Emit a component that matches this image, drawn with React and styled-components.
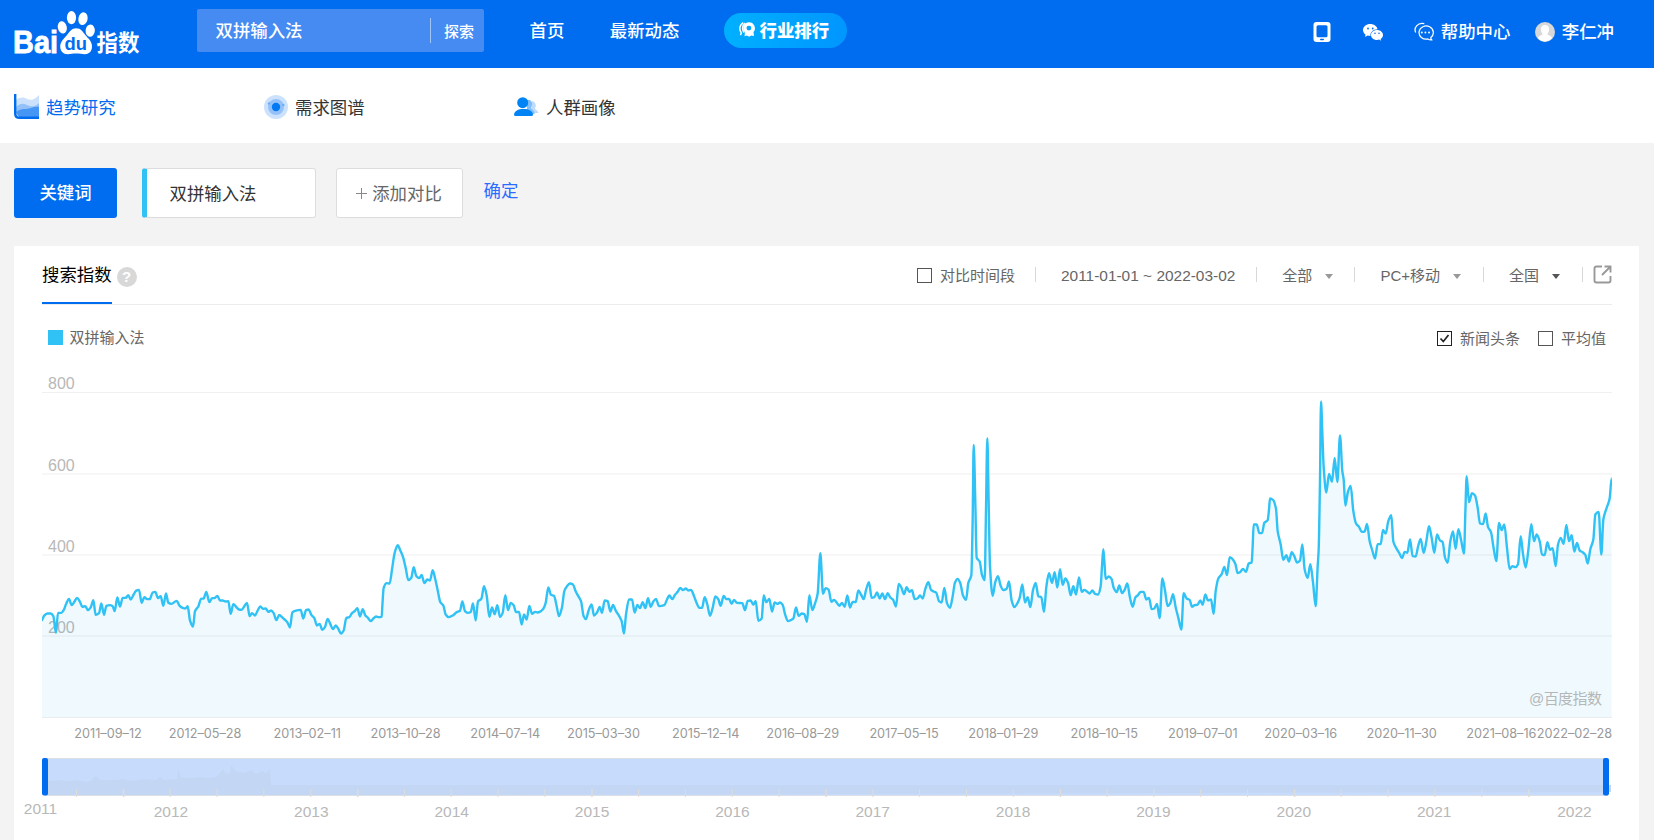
import { useState } from "react";
import styled, { createGlobalStyle } from "styled-components";

const YEARS = [2012, 2013, 2014, 2015, 2016, 2017, 2018, 2019, 2020, 2021, 2022];

const DATES = [
    "2011–09–12", "2012–05–28", "2013–02–11", "2013–10–28", "2014–07–14",
    "2015–03–30", "2015–12–14", "2016–08–29", "2017–05–15", "2018–01–29",
    "2018–10–15", "2019–07–01", "2020–03–16", "2020–11–30", "2021–08–16",
];

// weekly trend, in thirds of a pixel, each part with its own offset from the plot corner
const TREND = [
    {
        dx: -36, dy: 381,
        points: "36,302 42,289 52,282 62,282 70,290 78,340 84,280 94,280 102,270 108,254 117,238 125,257 133,247 141,235 150,247 157,262 166,260 174,272 182,264 190,242 197,286 207,281 214,252 222,286 229,259 240,257 248,260 254,275 262,234 270,261 278,235 287,235 295,227 302,240 311,225 318,214 327,211 335,250 343,233 351,239 359,239 368,219 376,217 384,236 392,230 400,259 408,222 415,250 424,253 440,244 449,259 458,265 466,267 473,260 480,303 489,321 495,275 505,261 513,238 521,237 529,217 538,248 546,236 553,236 562,229 570,243 578,243 587,246 595,245 602,283 610,254 620,264 627,270 635,271 643,260 651,250 659,290 666,281 675,288 683,273 691,261 700,268 707,267 715,277 723,273 731,281 739,302 748,286 756,293 764,300 772,308 780,324 787,279 795,274 812,271 820,297 828,272 836,270 844,286 853,296 861,318 869,313 877,331 885,322 893,298 901,314 909,329 917,318 925,328 933,342 941,333 949,295 958,293 966,281 974,275 982,266 990,291 998,269 1006,288 1014,295 1022,305 1030,297 1038,291 1046,293 1055,292 1057,260 1061,205 1070,191 1079,192 1086,150 1094,100 1103,77 1111,93 1119,112 1127,145 1135,182 1144,175 1151,143 1159,170 1168,176 1175,166 1183,191 1192,180 1200,183 1208,152",
    },
    {
        dx: 1164, dy: 381,
        points: "16,180 23,212 31,248 40,258 47,285 56,293 70,287 80,278 90,274 97,246 105,275 113,280 122,278 129,252 137,303 144,246 154,238 162,200 170,228 178,292 186,264 194,284 202,257 210,292 218,280 226,227 234,272 242,250 251,257 258,278 267,277 275,315 282,285 290,300 298,259 306,283 315,277 323,279 331,276 340,268 347,250 355,204 363,226 372,229 380,260 387,290 396,263 403,215 412,199 420,192 429,195 437,215 445,230 453,245 461,290 468,299 476,272 485,255 492,288 501,279 509,262 516,280 524,243 533,245 541,276 549,256 558,275 566,287 575,305 582,342 588,285 597,240 606,240 614,279 622,256 630,266 638,248 646,266 654,236 662,262 670,246 678,238 687,260 703,257 711,240 718,228 727,239 735,226 743,217 751,205 759,212 767,207 775,213 783,211 791,227 799,248 808,265 816,265 824,233 832,255 840,289 848,265 856,231 865,239 872,259 881,229 889,239 897,238 905,253 912,241 921,250 937,251 945,272 953,244 962,243 970,256 977,244 985,304 995,297 1001,228 1009,248 1018,238 1026,276 1034,249 1042,253 1050,249 1058,256 1066,287 1074,305 1082,302 1090,297 1098,264 1106,289 1115,282 1123,284 1131,307 1138,227 1147,272 1155,252 1163,222 1171,101 1179,223 1187,206 1196,211",
    },
    {
        dx: 2364, dy: 81,
        points: "4,547 12,541 20,549 28,559 36,550 44,562 52,528 60,564 68,547 77,548 85,513 93,525 101,539 108,512 117,488 125,535 133,533 141,519 149,537 157,522 165,539 173,521 181,534 189,540 198,561 206,493 214,504 222,524 230,503 238,517 246,512 254,539 262,537 270,528 278,537 286,508 295,488 303,511 311,516 319,520 327,545 335,549 343,505 351,551 360,565 368,530 375,489 383,478 391,491 399,528 408,541 415,490 424,467 428,300 431,76 436,250 440,415 449,426 456,466 464,482 468,270 472,56 476,250 480,440 488,529 496,487 504,470 512,499 520,512 530,508 537,486 545,543 553,563 561,553 569,535 577,495 585,549 593,533 601,563 609,512 617,490 625,530 634,533 642,577 649,502 657,461 666,490 674,458 682,504 690,449 698,496 706,477 714,490 722,527 730,500 738,525 747,474 755,517 763,511 771,516 779,522 787,513 795,523 804,525 812,500 816,440 820,389 824,440 827,478 836,471 845,479 851,505 860,518 868,498 876,521 884,511 892,492 900,535 908,562 916,534 924,527 932,517 941,517 949,540 957,535 965,569 973,567 981,553 989,596 997,477 1005,513 1013,560 1021,551 1029,524 1037,563 1045,595 1054,630 1061,521 1070,537 1079,541 1086,562 1094,557 1102,556 1111,543 1118,556 1126,525 1134,543 1143,540 1151,583 1157,515 1165,477 1175,464 1183,442 1191,467 1199,413 1207,418 1216,433 1223,461",
    },
    {
        dx: 3534, dy: -39,
        points: "60,578 69,568 78,577 86,552 95,549 98,500 101,435 110,435 118,461 126,461 133,430 143,422 147,390 150,357 159,361 168,388 173,455 182,495 190,541 199,527 207,546 215,518 223,530 231,549 240,543 247,495 254,570 263,595 271,554 279,608 287,680 293,560 296,510 300,300 303,66 307,160 311,262 319,339 327,283 336,307 344,235 352,308 360,168 367,275 371,300 376,378 384,336 392,319 400,395 408,432 417,442 425,457 434,456 441,433 449,485 457,513 465,537 473,494 482,494 489,451 497,462 505,425 514,407 520,486 530,508 538,521 546,536 554,517 562,520 570,480 578,530 587,531 594,502 602,478 611,520 619,485 627,440 635,475 643,520 651,465 660,483 668,488 675,534 683,550 691,485 699,456 707,508 715,449 724,485 732,522 736,400 740,290 747,368 756,341 765,348 773,385 780,432 789,434 797,402 804,442 813,458 821,507 829,545 837,430 845,452 853,435 861,505 869,569 877,560 886,563 894,554 902,470 909,523 917,564 925,512 934,434 942,485 950,465 959,485 966,524 974,527 982,488 990,511 998,506 1007,560 1014,495 1022,475 1031,493 1039,436 1047,485 1055,467 1063,516 1071,490 1079,513 1088,518 1096,526 1103,552 1111,509 1120,480 1126,405 1136,397 1144,525 1150,420 1159,388 1169,357 1175,296",
    },
];

const points = TREND.flatMap(({ dx, dy, points }) =>
    points.split(" ").map(p => {
        const [x, y] = p.split(",").map(Number);
        return [(x + dx) / 3, (y + dy) / 3];
    })
);

// monotone curve through the points, flat at every peak and valley
function smooth(pts) {
    const slope = i => (pts[i + 1][1] - pts[i][1]) / (pts[i + 1][0] - pts[i][0]);
    const tangent = i => {
        if (i === 0 || i === pts.length - 1) return 0;
        const a = slope(i - 1);
        const b = slope(i);
        return a * b <= 0 ? 0 : (2 * a * b) / (a + b);
    };
    let d = `M${pts[0][0]},${pts[0][1]}`;
    for (let i = 0; i < pts.length - 1; i++) {
        const [x0, y0] = pts[i];
        const [x1, y1] = pts[i + 1];
        const h = (x1 - x0) / 3;
        d += `C${[x0 + h, y0 + tangent(i) * h, x1 - h, y1 - tangent(i + 1) * h, x1, y1].map(n => n.toFixed(2)).join(",")}`;
    }
    return d;
}

const line = smooth(points);

function Logo() {
    return (
        <LogoSvg width="128" height="46" viewBox="0 0 128 46">
            <g fill="#fff">
                <text x="-1" y="44" fontFamily="Liberation Sans, sans-serif" fontWeight="700" fontSize="31.5" stroke="#fff" strokeWidth=".8" textLength="45" lengthAdjust="spacingAndGlyphs">Bai</text>
                <ellipse cx="57.5" cy="8.6" rx="4.6" ry="6.6" />
                <ellipse cx="69" cy="9.7" rx="4.6" ry="6.4" transform="rotate(12 69 9.7)" />
                <ellipse cx="48.3" cy="18.4" rx="4.5" ry="6.2" transform="rotate(-12 48.3 18.4)" />
                <ellipse cx="76.2" cy="21.6" rx="4.6" ry="6.2" transform="rotate(4 76.2 21.6)" />
                <path d="M62.3 19.2c4.6 0 6.6 3.6 9 6.8 3 3.8 6.7 6 6.7 11.5 0 5-3.2 7.7-7.2 7.7-3.200 0-5-.7-8.500-.7-3.700 0-5.300.7-8.600.7-4.600 0-7.500-3.200-7.500-7.700 0-5 3.800-7.800 6.600-11.300 2.700-3.400 4.900-7 9.500-7z" />
                <text x="82.5" y="42" fontFamily="Noto Sans CJK SC, sans-serif" fontWeight="700" fontSize="23" textLength="43" lengthAdjust="spacingAndGlyphs">指数</text>
            </g>
            <text x="50.5" y="41" fill="#006df0" fontFamily="Liberation Sans, sans-serif" fontWeight="700" fontSize="19" textLength="22.5" lengthAdjust="spacingAndGlyphs">du</text>
        </LogoSvg>
    );
}

function MedalIcon() {
    return (
        <svg width="17" height="15" viewBox="0 0 18 16">
            <path d="M4.5.8C.8 2.6-.4 7.5 2.4 11.5L1.5 14M6.6 1.2C3.2 3.6 3 8.5 5.5 11.2" fill="none" stroke="#fff" strokeWidth="1.6" />
            <path d="M10.500.2a6.400 6.400 0 0 1 4.900 10.500l.5 4.300-3-.5-2.200 1.300-2.300-1.300-2.500.6.3-4.200A6.400 6.400 0 0 1 10.500.2z" fill="#fff" />
            <circle cx="10.5" cy="6.5" r="2.6" fill="#00a6ff" />
        </svg>
    );
}

function TabletIcon() {
    return (
        <svg width="18" height="20" viewBox="0 0 18 20">
            <rect x=".5" width="17" height="20" rx="3" fill="#fff" />
            <rect x="3.5" y="3.3" width="11" height="12" rx="1.5" fill="#006df0" />
            <rect x="7" y="16.7" width="4" height="1.5" rx=".7" fill="#006df0" />
        </svg>
    );
}

function WechatIcon() {
    return (
        <svg width="20" height="17" viewBox="0 0 20 17">
            <path d="M7.3 0C3.2 0 0 2.7 0 6.1 0 8 1 9.6 2.6 10.7L2 13l2.6-1.4c.9.3 1.8.4 2.800.4C7.200 8 10.300 5.200 14.500 5.200 13.900 2.200 10.900 0 7.300 0z" fill="#fff" />
            <path d="M14 5.9c-3.400 0-6 2.300-6 5s2.600 5 6 5c.7 0 1.400-.1 2-.3l2.200 1.200-.6-1.900c1.500-.9 2.400-2.400 2.400-4 0-2.700-2.700-5-6-5z" fill="#fff" />
            <g fill="#006df0">
                <circle cx="5" cy="4.5" r=".9" /><circle cx="9.7" cy="4.5" r=".9" />
                <circle cx="12" cy="9.3" r=".8" /><circle cx="16" cy="9.3" r=".8" />
            </g>
        </svg>
    );
}

function ChatIcon() {
    return (
        <svg width="20" height="20" viewBox="0 0 21 20">
            <g fill="none" stroke="#fff" strokeWidth="1.3">
                <path d="M17.7 15.800A7.500 6.900 0 1 0 14.500 17.300c1.400.8 2.600 1.200 4 .9-.8-.8-1-1.500-.8-2.400z" />
                <path d="M1.800 10.500C-.5 5.800 3.600-.3 10.800 1.300" />
            </g>
            <g fill="#fff"><circle cx="8.2" cy="10.5" r="1" /><circle cx="12" cy="10.5" r="1" /><circle cx="15.8" cy="10.5" r="1" /></g>
        </svg>
    );
}

function AvatarIcon() {
    return (
        <svg width="20" height="20" viewBox="0 0 20 20">
            <circle cx="10" cy="10" r="10" fill="#d8d8d8" />
            <path d="M10 3c2.700 0 4.100 1.900 4.100 4.300 0 2-.7 3.400-1.500 4.200v1.200c2 .7 4 1.500 4.500 3.400A9.200 9.200 0 0 1 2.900 16c.5-1.800 2.500-2.600 4.500-3.300v-1.200C6.600 10.700 5.900 9.300 5.900 7.300 5.900 4.900 7.300 3 10 3z" fill="#fff" />
        </svg>
    );
}

function TrendIcon() {
    return (
        <svg width="25" height="25" viewBox="0 0 25 25">
            <path d="M2 6c4-3 7-3 11-1 5 2 8 0 12-4v22H5L2 20z" fill="#cce2fc" />
            <path d="M2 13c4-4 7-4 11-2 5 2 8 2 12-2v14H5L2 20z" fill="#94c2f8" />
            <path d="M2 18c4-3 6-3 10-3 5 0 8-3 13-2v10H5z" fill="#4697f5" />
            <path d="M1.200 0v19.500Q1.200 23.800 5.500 23.800H25" fill="none" stroke="#006df0" strokeWidth="2.400" />
        </svg>
    );
}

function GraphIcon() {
    return (
        <svg width="24" height="24" viewBox="0 0 24 24">
            <circle cx="12" cy="12" r="12" fill="#cce2fc" />
            <circle cx="12" cy="12" r="8" fill="#94c2f8" />
            <circle cx="5" cy="8.5" r="1.2" fill="#6dadf7" /><circle cx="19.3" cy="10" r="1.2" fill="#6dadf7" />
            <circle cx="12" cy="12" r="4.2" fill="#0079f2" />
        </svg>
    );
}

function PeopleIcon() {
    return (
        <svg width="25" height="20" viewBox="0 0 25 20">
            <path d="M18 4a4.500 4.500 0 0 1 3 7c0 2 3 2.500 3.500 5H18z" fill="#bbdcfc" />
            <path d="M13 3c4-1 6.500 3 4.500 7-1 2 2.500 3 3 5.500v1.500H13z" fill="#82bffa" />
            <circle cx="8.7" cy="5.7" r="5.5" fill="#0084f5" />
            <path d="M0 17.500C.5 14 4 12 9.500 12s9 2 9.500 5.500q0 1.500-1.500 1.500h-16Q0 19 0 17.500z" fill="#0084f5" />
        </svg>
    );
}

function ExportIcon() {
    return (
        <svg width="19" height="19" viewBox="0 0 19 19" fill="none" stroke="#999" strokeWidth="1.9">
            <path d="M9 1.500H3.500q-2 0-2 2v12q0 2 2 2h12q2 0 2-2V11M11.500 1.500h6v6M17.500 1.500 9 10" />
        </svg>
    );
}

function Check({ label, dark, defaultOn = false }) {
    const [on, setOn] = useState(defaultOn);
    return (
        <CheckLabel onClick={() => setOn(!on)}>
            <Box $dark={dark}>
                {on && <svg width="11" height="11" viewBox="0 0 11 11"><path d="M1.500 5.500 4.300 8.500 9.500 2" fill="none" stroke="#222" strokeWidth="1.7" /></svg>}
            </Box>
            {label}
        </CheckLabel>
    );
}

function TrendChart() {
    return (
        <ChartSvg width="1570" height="352" viewBox="0 -25.5 1570 352">
            <Axis>
                <text x="6" y="-3.5">800</text>
                <text x="6" y="78">600</text>
                <text x="6" y="159">400</text>
                <text x="6" y="240.5">200</text>
            </Axis>
            {[0, 81.5, 162.5, 243.5, 325].map(y => (
                <rect key={y} x="0" y={y - 0.5} width="1570" height="1" fill="#f0f0f0" />
            ))}
            <path d={`${line}V325H0z`} fill="#30b9ea" fillOpacity=".07" />
            <path d={line} fill="none" stroke="#30c2f5" strokeWidth="2.4" strokeLinejoin="round" />
            <Mark x="1487" y="311" textLength="73">@百度指数</Mark>
        </ChartSvg>
    );
}

function RangeSlider() {
    const ticks = Array.from({ length: 32 }, (_, i) => 34 + i * 46.84);
    return (
        <ChartSvg width="1570" height="42" viewBox="0 0 1570 42">
            <rect x="3" y=".5" width="1563" height="37" fill="#c7dbfc" />
            <path d="M4 38V23l12-1 8 1 10-1 9 2 6-1 4-5 6 4 12 0 10-1 8 2 13-2 12 1 4-3 4 3 13-1 1-10 3 8 8 1 12-1 7 1 8-1 7-8 3 5 4-1 1-8 5 6 8 2 7-3 5 4 6-3 4 2 4-4 1 16h1340v7z" fill="#c3d7f5" />
            <rect x="3" y="0" width="1563" height="1" fill="#dcdfe5" />
            <rect x="3" y="37" width="1563" height="1" fill="#dcdfe5" />
            {ticks.map((x, i) => <rect key={x} x={x} y="31" width={i % 5 === 1 ? 1.5 : 1} height="8" fill="#dcdcdc" />)}
            <rect x="0" y="0" width="6" height="37.5" rx="2" fill="#006df0" />
            <rect x="1561" y="0" width="6" height="37.5" rx="2" fill="#006df0" />
        </ChartSvg>
    );
}

export default function App() {
    return (
        <Page>
            <GlobalStyle />
            <Header>
                <Logo />
                <Search>
                    <span>双拼输入法</span>
                    <button>探索</button>
                </Search>
                <HeaderLink>首页</HeaderLink>
                <HeaderLink>最新动态</HeaderLink>
                <RankPill><MedalIcon />行业排行</RankPill>
                <Tools>
                    <TabletIcon />
                    <WechatIcon />
                    <Tool><ChatIcon />帮助中心</Tool>
                    <Tool><AvatarIcon />李仁冲</Tool>
                </Tools>
            </Header>
            <SubNav>
                <SubNavItem $active><TrendIcon />趋势研究</SubNavItem>
                <SubNavItem><GraphIcon />需求图谱</SubNavItem>
                <SubNavItem><PeopleIcon />人群画像</SubNavItem>
            </SubNav>
            <Keywords>
                <KeywordTitle>关键词</KeywordTitle>
                <Keyword>双拼输入法</Keyword>
                <AddButton>
                    <svg width="11" height="11" viewBox="0 0 11 11"><path d="M5.500 0v11M0 5.500h11" stroke="#888" strokeWidth="1" /></svg>
                    添加对比
                </AddButton>
                <Confirm>确定</Confirm>
            </Keywords>
            <Card>
                <CardHeader>
                    <Tab>搜索指数</Tab>
                    <Help>?</Help>
                    <Filters>
                        <Check label="对比时间段" />
                        <Divider $left={20} $right={25} />
                        <DateRange>2011-01-01 ~ 2022-03-02</DateRange>
                        <Divider $left={21} $right={25} />
                        全部<Caret />
                        <Divider $left={21} $right={25} />
                        PC+移动<Caret />
                        <Divider $left={22} $right={25} />
                        全国<Caret $dark />
                        <Divider $left={22} $right={10} />
                        <ExportIcon />
                    </Filters>
                </CardHeader>
                <Legend>
                    <Swatch /><LegendName>双拼输入法</LegendName>
                    <Options>
                        <Check label="新闻头条" dark defaultOn />
                        <Check label="平均值" />
                    </Options>
                </Legend>
                <TrendChart />
                <DateRow width="1570" height="34" viewBox="0 0 1570 34">
                    {DATES.map((date, i) => <text key={date} x={99.8 + i * 99.62} y="18.5">{date}</text>)}
                    <text x="1570" y="18.5">2022–02–28</text>
                </DateRow>
                <RangeSlider />
                <YearRow width="1570" height="30" viewBox="0 0 1570 30">
                    <text x="-1.5" y="14">2011</text>
                    {YEARS.map((year, i) => <text key={year} x={129 + i * 140.35} y="17">{year}</text>)}
                </YearRow>
            </Card>
        </Page>
    );
}

const GlobalStyle = createGlobalStyle`
    * {
        box-sizing: border-box;
    }
    body {
        margin: 0;
        overflow: hidden;
        background: #f3f3f3;
        font-family: "Liberation Sans", "Noto Sans CJK SC", sans-serif;
    }
    button {
        font-family: inherit;
        border: none;
        background: none;
        padding: 0;
        cursor: pointer;
    }
`;

const Page = styled.div`
    height: 840px;
    overflow: hidden;
    font-size: 17.4px;
    color: #333;
    white-space: nowrap;
`;

const Header = styled.header`
    height: 68px;
    padding: 9px 40px 0 14px;
    display: flex;
    align-items: flex-start;
    background: #006df0;
    color: #fff;
    font-weight: 500;
`;

const LogoSvg = styled.svg`
    flex: none;
    margin-right: 55px;
    overflow: visible;
`;

const Search = styled.div`
    width: 287px;
    height: 43px;
    padding: 0 10px 0 18.5px;
    display: flex;
    align-items: center;
    justify-content: space-between;
    border-radius: 2px;
    background: #458bf2;

    span {
        padding-bottom: 2px;
    }

    button {
        height: 25px;
        padding-left: 13px;
        border-left: 1px solid #a2c5f8;
        color: #fff;
        font-size: 15px;
        font-weight: 500;
    }
`;

const HeaderLink = styled.a`
    margin-left: 45.5px;
    line-height: 44px;
`;

const RankPill = styled.div`
    width: 123px;
    height: 35px;
    margin: 4px 0 0 45px;
    padding: 0 4px 2px 0;
    display: flex;
    align-items: center;
    justify-content: center;
    gap: 4px;
    border-radius: 18px;
    background: linear-gradient(90deg, #00b0ff, #0096ff);
    font-weight: 900;
    font-size: 17.4px;
`;

const Tools = styled.div`
    height: 46px;
    margin-left: auto;
    display: flex;
    align-items: center;

    > svg:nth-child(1) {
        margin-right: 32px;
    }
    > svg:nth-child(2) {
        margin-right: 31px;
    }
`;

const Tool = styled.div`
    padding-bottom: 3px;
    display: flex;
    align-items: center;
    gap: 6.5px;

    svg {
        margin-top: 3px;
    }

    & + & {
        margin-left: 25px;
    }
`;

const SubNav = styled.nav`
    height: 75px;
    padding: 2px 14px 0;
    display: flex;
    background: #fff;
`;

const SubNavItem = styled.a`
    width: 250px;
    display: flex;
    align-items: center;
    gap: 7px;
    color: ${({ $active }) => ($active ? "#006df0" : "#333")};
`;

const Keywords = styled.section`
    padding: 25px 14px 28px;
    display: flex;
`;

const KeywordTitle = styled.div`
    width: 103px;
    height: 50px;
    border-radius: 3px;
    background: #006df0;
    color: #fff;
    font-weight: 500;
    line-height: 51px;
    text-align: center;
`;

const Keyword = styled.div`
    width: 174px;
    height: 50px;
    margin-left: 25px;
    padding-left: 22.5px;
    border: 1px solid #ddd;
    border-left: 5px solid #30c2f5;
    border-radius: 3px;
    background: #fff;
    line-height: 50px;
`;

const AddButton = styled.button`
    width: 127px;
    height: 50px;
    margin-left: 20px;
    padding: 0 1px 2px 0;
    display: flex;
    align-items: center;
    justify-content: center;
    gap: 5px;
    border: 1px solid #ddd;
    border-radius: 3px;
    background: #fff;
    color: #666;
    font-size: 17.4px;

    svg {
        margin-top: 2px;
    }
`;

const Confirm = styled.a`
    margin-left: 20.5px;
    color: #2a6cff;
    line-height: 47px;
`;

const Card = styled.main`
    width: 1625px;
    height: 600px;
    margin-left: 14px;
    padding: 0 27px 0 28px;
    background: #fff;
`;

const CardHeader = styled.div`
    height: 59px;
    display: flex;
    align-items: center;
    border-bottom: 1px solid #ececec;
`;

const Tab = styled.div`
    height: 58px;
    border-bottom: 2px solid #006df0;
    color: #000;
    line-height: 58px;
`;

const Help = styled.span`
    width: 20px;
    height: 20px;
    margin: 4px 0 0 5px;
    border-radius: 50%;
    background: #d8d8d8;
    color: #fff;
    font-size: 15px;
    font-weight: 700;
    line-height: 20px;
    text-align: center;
`;

const Filters = styled.div`
    margin: -1px 0 0 auto;
    display: flex;
    align-items: center;
    color: #666;
    font-size: 15px;
`;

const Divider = styled.i`
    width: 1px;
    height: 15px;
    margin-left: ${({ $left }) => $left}px;
    margin-right: ${({ $right }) => $right}px;
    background: #d8d8d8;
`;

const DateRange = styled.span`
    margin-top: 2px;
    font-size: 15.45px;
`;

const Caret = styled.i`
    margin: 3px 0 0 13px;
    border: 4.5px solid transparent;
    border-top: 5px solid ${({ $dark }) => ($dark ? "#555" : "#999")};
    border-bottom: none;
`;

const CheckLabel = styled.label`
    display: flex;
    align-items: center;
    gap: 7.5px;
    cursor: pointer;
`;

const Box = styled.span`
    width: 15px;
    height: 15px;
    margin-top: 1px;
    display: flex;
    align-items: center;
    justify-content: center;
    border: 1px solid ${({ $dark }) => ($dark ? "#222" : "#555")};
`;

const Legend = styled.div`
    height: 62px;
    padding: 3px 6px 0;
    display: flex;
    align-items: center;
    color: #666;
    font-size: 15px;
`;

const LegendName = styled.span`
    padding-bottom: 2px;
`;

const Swatch = styled.i`
    width: 15px;
    height: 15px;
    margin-right: 6.5px;
    background: #30c2f5;
`;

const Options = styled.div`
    margin-left: auto;
    display: flex;
    gap: 18.5px;
`;

const ChartSvg = styled.svg`
    display: block;
`;

const Axis = styled.g`
    fill: #b8b8b8;
    font-size: 16px;
`;

const Mark = styled.text`
    fill: #b4b7b8;
    font-size: 15px;
`;

const DateRow = styled.svg`
    display: block;
    margin-bottom: 5px;
    overflow: visible;
    fill: #999;
    font-family: Inter, sans-serif;
    font-size: 12.7px;
    text-anchor: end;
`;

const YearRow = styled.svg`
    display: block;
    overflow: visible;
    fill: #b8b8b8;
    font-size: 15.5px;
    text-anchor: middle;
`;
